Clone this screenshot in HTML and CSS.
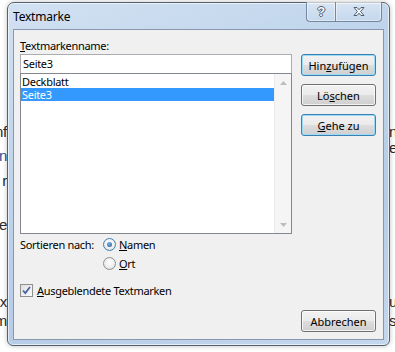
FILE: index.html
```html
<!DOCTYPE html>
<html lang="de">
<head>
  <meta charset="UTF-8" />
  <title>Textmarke</title>
  <link rel="stylesheet" href="styles.css">
</head>
<body>
  <div class="doc">
    <div class="doc-left">
      <div class="frag">nf</div>
      <div class="frag link gap-a">n</div>
      <div class="frag gap-b">r</div>
      <div class="frag gap-c">re</div>
      <div class="frag gap-d">x</div>
      <div class="frag gap-e">m</div>
    </div>
    <div class="doc-right">
      <div class="frag">n</div>
      <div class="frag">e</div>
      <div class="frag gap-f">u</div>
      <div class="frag gap-e">s</div>
    </div>
  </div>

  <div class="dialog">
    <div class="titlebar">
      <span class="title">Textmarke</span>
      <div class="caps">
        <span class="cap help">?</span>
        <span class="cap close">
          <svg width="12" height="9" viewBox="0 0 12 9">
            <path d="M1 0.5h3l2 2.3 2-2.3h3l-3.4 4 3.4 4h-3l-2-2.3-2 2.3h-3l3.4-4z" fill="#f3f6fa" stroke="#4f5d6e" stroke-width="1" stroke-linejoin="round"/>
          </svg>
        </span>
      </div>
    </div>

    <div class="panel">
      <div class="field-label"><u>T</u>extmarkenname:</div>
      <div class="main">
        <div class="left">
          <div class="input">Seite3</div>
          <div class="list">
            <div class="items">
              <div class="item">Deckblatt</div>
              <div class="item sel">Seite3</div>
            </div>
            <div class="scroll">
              <span class="arrow">
                <svg width="7" height="4" viewBox="0 0 7 4"><path d="M0 4L3.5 0 7 4z" fill="#bdbdbd"/></svg>
              </span>
              <span class="arrow">
                <svg width="7" height="4" viewBox="0 0 7 4"><path d="M0 0L3.5 4 7 0z" fill="#bdbdbd"/></svg>
              </span>
            </div>
          </div>
        </div>
        <div class="btns">
          <button class="btn glow">Hin<u>z</u>ufügen</button>
          <button class="btn">Lö<u>s</u>chen</button>
          <button class="btn glow"><u>G</u>ehe zu</button>
        </div>
      </div>

      <div class="sort">
        <span class="sort-label">Sortieren nach:</span>
        <div class="radios">
          <div class="radio"><span class="dot on"></span><span><u>N</u>amen</span></div>
          <div class="radio"><span class="dot"></span><span><u>O</u>rt</span></div>
        </div>
      </div>

      <div class="check">
        <span class="box">
          <svg width="9" height="9" viewBox="0 0 9 9"><path d="M1 4.5l2.3 2.6L8 1" fill="none" stroke="#4a5fa3" stroke-width="1.7"/></svg>
        </span>
        <span><u>A</u>usgeblendete Textmarken</span>
      </div>

      <div class="footer">
        <button class="btn">Abbrechen</button>
      </div>
    </div>
  </div>
</body>
</html>
```

FILE: styles.css
```css
* {
  margin: 0;
  padding: 0;
  box-sizing: border-box;
}

body {
  position: relative;
  width: 395px;
  height: 352px;
  overflow: hidden;
  background: #fff;
  font-family: "Noto Sans", sans-serif;
  font-size: 11px;
  letter-spacing: -0.3px;
  color: #000;
}

u {
  text-decoration: underline;
  text-underline-offset: 1px;
}

/* document behind the dialog */
.doc {
  display: flex;
  justify-content: space-between;
  height: 352px;
  font: 15px "Liberation Sans", sans-serif;
  line-height: 16px;
  color: #2a2a2a;
}

.doc-left {
  width: 7px;
  padding-top: 124px;
  overflow: hidden;
  direction: rtl;
  white-space: nowrap;
}

.doc-right {
  width: 6px;
  padding-top: 124px;
  overflow: hidden;
  white-space: nowrap;
}

.frag { height: 16px; }
.link { color: #1f4f9c; }
.gap-a { margin-top: 8px; }
.gap-b { margin-top: 9px; }
.gap-c { margin-top: 28px; }
.gap-d { margin-top: 61px; }
.gap-e { margin-top: 3px; }
.gap-f { margin-top: 138px; }

/* dialog window */
.dialog {
  position: absolute;
  left: 7px;
  top: 2px;
  width: 383px;
  height: 344px;
  display: flex;
  flex-direction: column;
  padding: 0 5px 5px;
  border: 1px solid #56616f;
  border-radius: 7px 7px 6px 6px;
  background: linear-gradient(160deg, #d2e1f2 0%, #bed4eb 35%, #b7cde7 70%, #c4d8ed 100%);
  box-shadow: inset 0 0 0 1px rgba(255, 255, 255, 0.6), 0 0 5px rgba(0, 0, 0, 0.25);
}

.titlebar {
  display: flex;
  justify-content: space-between;
  height: 26px;
}

.title {
  align-self: center;
  font-size: 12px;
  letter-spacing: -0.2px;
}

.caps {
  display: flex;
  align-self: flex-start;
  margin-top: -1px;
  margin-right: 2px;
}

.cap {
  display: flex;
  align-items: center;
  justify-content: center;
  height: 20px;
  border: 1px solid #75879e;
  border-top: none;
  background: linear-gradient(rgba(255, 255, 255, 0.35), rgba(255, 255, 255, 0.05));
  box-shadow: inset 0 0 0 1px rgba(255, 255, 255, 0.45);
}

.help {
  width: 29px;
  border-right: none;
  border-radius: 0 0 0 4px;
  font: bold 13px "Liberation Sans", sans-serif;
  color: #f3f6fa;
  text-shadow: 1px 0 0 #56606d, -1px 0 0 #56606d, 0 1px 0 #56606d, 0 -1px 0 #56606d;
}

.close {
  width: 47px;
  border-radius: 0 0 4px 0;
}

.panel {
  flex: 1;
  display: flex;
  flex-direction: column;
  padding: 8px 7px 0 6px;
  border: 1px solid #8797ad;
  background: #f0f0f0;
}

.field-label {
  height: 15px;
  line-height: 15px;
  margin-bottom: 1px;
}

.main {
  display: flex;
  gap: 9px;
  align-items: flex-start;
}

.left {
  width: 272px;
  display: flex;
  flex-direction: column;
}

.input {
  height: 20px;
  padding-left: 2px;
  line-height: 18px;
  border: 1px solid #abadb3;
  background: #fff;
}

.list {
  display: flex;
  height: 161px;
  margin-top: -1px;
  border: 1px solid #828790;
  background: #fff;
}

.items {
  flex: 1;
  padding-top: 1px;
}

.item {
  height: 13px;
  line-height: 13px;
  padding-left: 1px;
  overflow: hidden;
}

.item.sel {
  background: #3399ff;
  color: #fff;
}

.scroll {
  width: 17px;
  display: flex;
  flex-direction: column;
  justify-content: space-between;
  background: #f5f5f5;
  border-left: 1px solid #ececec;
}

.arrow {
  display: flex;
  align-items: center;
  justify-content: center;
  height: 17px;
}

.btns {
  display: flex;
  flex-direction: column;
  gap: 8px;
  width: 75px;
}

.btn {
  width: 75px;
  height: 22px;
  font: inherit;
  color: #000;
  border: 1px solid #707070;
  border-radius: 3px;
  background: linear-gradient(#f2f2f2 0%, #ebebeb 48%, #dddddd 52%, #cfcfcf 100%);
  box-shadow: inset 0 0 0 1px rgba(255, 255, 255, 0.75);
}

.btn.glow {
  border-color: #3c7fb1;
  box-shadow: inset 0 0 0 1px #9adcf7;
}

.sort {
  display: flex;
  margin-top: 1px;
}

.sort-label {
  width: 83px;
  line-height: 19px;
}

.radio,
.check {
  display: flex;
  align-items: center;
  height: 19px;
}

.radio { gap: 3px; }

.dot {
  position: relative;
  width: 13px;
  height: 13px;
  border: 1px solid #8e8f8f;
  border-radius: 50%;
  background: radial-gradient(circle at 50% 40%, #ffffff 0%, #ececec 60%, #d2d2d2 100%);
}

.dot.on {
  border-color: #3c7fb1;
}

.dot.on::after {
  content: "";
  position: absolute;
  left: 3px;
  top: 3px;
  width: 5px;
  height: 5px;
  border-radius: 50%;
  background: radial-gradient(circle at 40% 35%, #7fb2e0, #1f5b94);
}

.check {
  gap: 4px;
  margin-top: 8px;
}

.box {
  display: flex;
  align-items: center;
  justify-content: center;
  width: 13px;
  height: 13px;
  border: 1px solid #8e8f8f;
  background: linear-gradient(135deg, #dedede, #fbfbfb);
}

.footer {
  display: flex;
  justify-content: flex-end;
  margin-top: 10px;
}
```
